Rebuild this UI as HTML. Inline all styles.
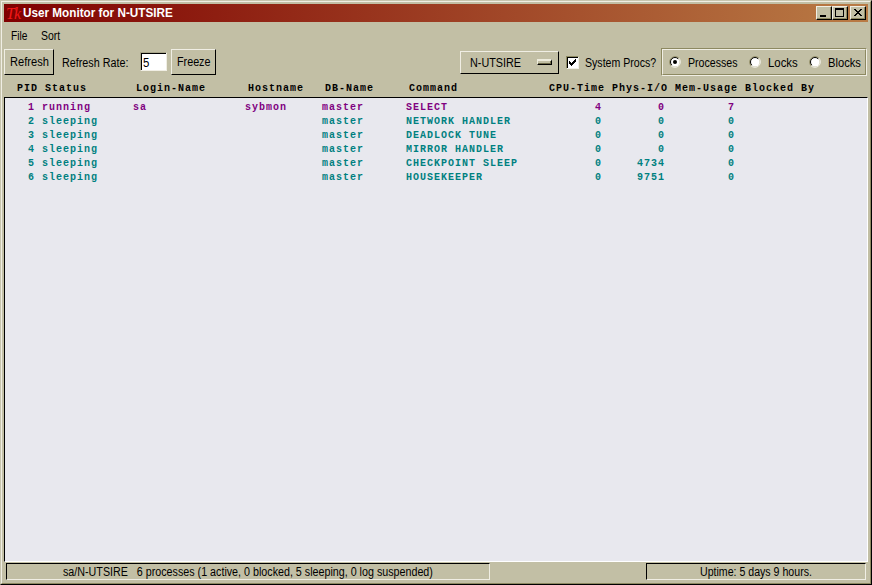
<!DOCTYPE html>
<html><head><meta charset="utf-8"><title>User Monitor for N-UTSIRE</title>
<style>
html,body{margin:0;padding:0;}
body{width:872px;height:585px;overflow:hidden;background:#C2BFA5;position:relative;
 font-family:"Liberation Sans",sans-serif;font-size:12px;color:#000;}
*{box-sizing:border-box;}
.abs{position:absolute;}
#frame{left:0;top:0;width:872px;height:585px;border-top:1px solid #C8C5AE;border-left:1px solid #C8C5AE;border-right:1px solid #000;border-bottom:1px solid #000;}
#frame2{left:1px;top:1px;width:870px;height:583px;border-top:1px solid #F0EEE4;border-left:1px solid #F0EEE4;border-right:1px solid #8D8961;border-bottom:1px solid #8D8961;}
#title{left:4px;top:4px;width:864px;height:18px;background:linear-gradient(to right,#800000 0%,#B97B45 100%);}
#ttext{left:22.8px;top:6px;transform:scaleX(0.977);height:14px;line-height:14px;color:#fff;font-weight:bold;font-size:12px;white-space:nowrap;transform-origin:0 0;}
#tk{left:6px;top:6px;height:16px;line-height:16px;color:#F01818;font-family:"Liberation Serif",serif;font-style:italic;font-weight:normal;font-size:16px;letter-spacing:-1px;white-space:nowrap;}
.tb{top:6px;width:16px;height:14px;background:#C2BFA5;box-shadow:inset -1px -1px 0 #8D8961;border-top:1px solid #F0EEE4;border-left:1px solid #F0EEE4;border-right:1px solid #000;border-bottom:1px solid #000;}
.tb i{position:absolute;display:block;}
.t{white-space:nowrap;height:14px;line-height:14px;transform-origin:0 50%;}
.btn{background:#C2BFA5;border-top:1px solid #F0EEE4;border-left:1px solid #F0EEE4;border-right:1px solid #000;border-bottom:1px solid #000;}
.sunk{border-top:1px solid #000;border-left:1px solid #000;border-right:1px solid #F0EEE4;border-bottom:1px solid #F0EEE4;}
.mono{font-family:"Liberation Mono",monospace;font-size:10px;letter-spacing:1px;font-weight:bold;white-space:pre;line-height:14px;height:14px;}
.p{color:#800080;} .g{color:#008080;}
.radio{width:12px;height:12px;border-radius:50%;background:#fff;border:1px solid;border-color:#5a573c #F0EEE4 #F0EEE4 #5a573c;}
</style></head><body>
<div id="frame" class="abs"></div><div id="frame2" class="abs"></div>
<div id="title" class="abs"></div>
<div id="tk" class="abs">Tk</div>
<div id="ttext" class="abs">User Monitor for N-UTSIRE</div>
<div class="abs tb" style="left:816px"><i style="left:3px;top:8px;width:6px;height:2px;background:#000"></i></div>
<div class="abs tb" style="left:832px"><i style="left:2px;top:1px;width:9px;height:9px;border:1px solid #000;border-top-width:2px"></i></div>
<div class="abs tb" style="left:850px"><svg class="abs" style="left:3px;top:2px" width="8" height="7" viewBox="0 0 8 7" shape-rendering="crispEdges"><path d="M0 0h2v1h-2z M6 0h2v1h-2z M1 1h2v1h-2z M5 1h2v1h-2z M2 2h4v1h-4z M3 3h2v1h-2z M2 4h4v1h-4z M1 5h2v1h-2z M5 5h2v1h-2z M0 6h2v1h-2z M6 6h2v1h-2z" fill="#000"/></svg></div>

<div class="abs t" id="mfile" style="left:11px;top:29px;transform:scaleX(0.85)">File</div>
<div class="abs t" id="msort" style="left:41px;top:29px;transform:scaleX(0.87)">Sort</div>

<div class="abs btn" style="left:4px;top:49px;width:50px;height:26px"></div>
<div class="abs t" id="brefresh" style="left:9.6px;top:55px;transform:scaleX(0.925)">Refresh</div>
<div class="abs t" id="lrate" style="left:62px;top:56px;transform:scaleX(0.897)">Refresh Rate:</div>
<div class="abs" style="left:140px;top:52px;width:27px;height:19px;border-top:1px solid #A9A68A;border-left:1px solid #A9A68A;border-right:1px solid #F0EEE4;border-bottom:1px solid #F0EEE4;"></div>
<div class="abs" style="left:141px;top:53px;width:25px;height:17px;background:#fff;border-top:1px solid #000;border-left:1px solid #000;"></div>
<div class="abs t" id="e5" style="left:143.3px;top:56px;transform:scaleX(0.95)">5</div>
<div class="abs btn" style="left:171px;top:49px;width:45px;height:26px"></div>
<div class="abs t" id="bfreeze" style="left:176.8px;top:55px;transform:scaleX(0.896)">Freeze</div>

<div class="abs btn" style="left:460px;top:51px;width:99px;height:23px"></div>
<div class="abs t" id="omenu" style="left:469.7px;top:56px;transform:scaleX(0.9)">N-UTSIRE</div>
<div class="abs" style="left:537px;top:59px;width:15px;height:6px;background:#C2BFA5;border-top:2px solid #EEECDD;border-left:1px solid #EEECDD;border-right:1px solid #000;border-bottom:1px solid #000;box-shadow:inset -1px -1px 0 #6f6c4c;"></div>

<div class="abs" style="left:566px;top:56px;width:13px;height:13px;border-top:1px solid #8D8961;border-left:1px solid #8D8961;border-right:1px solid #F0EEE4;border-bottom:1px solid #F0EEE4;"></div>
<div class="abs" style="left:567px;top:57px;width:11px;height:11px;background:#fff;border-top:1px solid #000;border-left:1px solid #000;"></div>
<svg class="abs" style="left:569px;top:59px" width="7" height="7" viewBox="0 0 7 7" shape-rendering="crispEdges"><path d="M6 0h1v3h-1z M5 1h1v3h-1z M4 2h1v3h-1z M3 3h1v3h-1z M2 4h1v3h-1z M1 3h1v3h-1z M0 2h1v3h-1z" fill="#000"/></svg>
<div class="abs t" id="lsys" style="left:584.6px;top:56px;transform:scaleX(0.882)">System Procs?</div>

<div class="abs" style="left:661px;top:48px;width:206px;height:28px;border:1px solid;border-color:#8D8961 #F0EEE4 #F0EEE4 #8D8961;"></div>
<div class="abs" style="left:662px;top:49px;width:204px;height:26px;border:1px solid;border-color:#F0EEE4 #8D8961 #8D8961 #F0EEE4;"></div>
<svg class="abs" style="left:669px;top:56px" width="12" height="12" viewBox="0 0 12 12"><circle cx="6" cy="6" r="4.6" fill="#fff"/><path d="M1.76 10.24 A6 6 0 0 1 10.24 1.76" stroke="#8D8961" stroke-width="1" fill="none" transform="translate(6 6) scale(0.9167) translate(-6 -6)"/><path d="M2.46 9.54 A5 5 0 0 1 9.54 2.46" stroke="#000" stroke-width="1.1" fill="none" transform="translate(6 6) scale(0.9) translate(-6 -6)"/><path d="M10.24 1.76 A6 6 0 0 1 1.76 10.24" stroke="#F4F2EA" stroke-width="1" fill="none" transform="translate(6 6) scale(0.9167) translate(-6 -6)"/><circle cx="6" cy="6" r="2" fill="#000"/></svg>
<div class="abs t" id="rproc" style="left:687.5px;top:56px;transform:scaleX(0.884)">Processes</div>
<svg class="abs" style="left:749px;top:56px" width="12" height="12" viewBox="0 0 12 12"><circle cx="6" cy="6" r="4.6" fill="#fff"/><path d="M1.76 10.24 A6 6 0 0 1 10.24 1.76" stroke="#8D8961" stroke-width="1" fill="none" transform="translate(6 6) scale(0.9167) translate(-6 -6)"/><path d="M2.46 9.54 A5 5 0 0 1 9.54 2.46" stroke="#000" stroke-width="1.1" fill="none" transform="translate(6 6) scale(0.9) translate(-6 -6)"/><path d="M10.24 1.76 A6 6 0 0 1 1.76 10.24" stroke="#F4F2EA" stroke-width="1" fill="none" transform="translate(6 6) scale(0.9167) translate(-6 -6)"/></svg>
<div class="abs t" id="rlock" style="left:767.9px;top:56px;transform:scaleX(0.947)">Locks</div>
<svg class="abs" style="left:809px;top:56px" width="12" height="12" viewBox="0 0 12 12"><circle cx="6" cy="6" r="4.6" fill="#fff"/><path d="M1.76 10.24 A6 6 0 0 1 10.24 1.76" stroke="#8D8961" stroke-width="1" fill="none" transform="translate(6 6) scale(0.9167) translate(-6 -6)"/><path d="M2.46 9.54 A5 5 0 0 1 9.54 2.46" stroke="#000" stroke-width="1.1" fill="none" transform="translate(6 6) scale(0.9) translate(-6 -6)"/><path d="M10.24 1.76 A6 6 0 0 1 1.76 10.24" stroke="#F4F2EA" stroke-width="1" fill="none" transform="translate(6 6) scale(0.9167) translate(-6 -6)"/></svg>
<div class="abs t" id="rblock" style="left:827.7px;top:56px;transform:scaleX(0.93)">Blocks</div>

<div class="abs mono" id="hdr" style="left:10px;top:82px"> PID Status       Login-Name      Hostname   DB-Name     Command             CPU-Time Phys-I/O Mem-Usage Blocked By</div>

<div class="abs" id="list" style="left:4px;top:97px;width:864px;height:465px;background:#E8E8EE;border:1px solid;border-color:#000 #fff #fff #000;"></div>
<div class="abs mono p" style="left:7px;top:101px">   1 running      sa              sybmon     master      SELECT                     4        0         7</div>
<div class="abs mono g" style="left:7px;top:115px">   2 sleeping                                master      NETWORK HANDLER            0        0         0</div>
<div class="abs mono g" style="left:7px;top:129px">   3 sleeping                                master      DEADLOCK TUNE              0        0         0</div>
<div class="abs mono g" style="left:7px;top:143px">   4 sleeping                                master      MIRROR HANDLER             0        0         0</div>
<div class="abs mono g" style="left:7px;top:157px">   5 sleeping                                master      CHECKPOINT SLEEP           0     4734         0</div>
<div class="abs mono g" style="left:7px;top:171px">   6 sleeping                                master      HOUSEKEEPER                0     9751         0</div>

<div class="abs sunk" style="left:6px;top:563px;width:484px;height:17px"></div>
<div class="abs t" id="st1" style="left:63px;top:565px;transform:scaleX(0.893)">sa/N-UTSIRE&nbsp;&nbsp; 6 processes (1 active, 0 blocked, 5 sleeping, 0 log suspended)</div>
<div class="abs sunk" style="left:646px;top:563px;width:220px;height:17px"></div>
<div class="abs t" id="st2" style="left:699.8px;top:565px;transform:scaleX(0.883)">Uptime: 5 days 9 hours.</div>
</body></html>
